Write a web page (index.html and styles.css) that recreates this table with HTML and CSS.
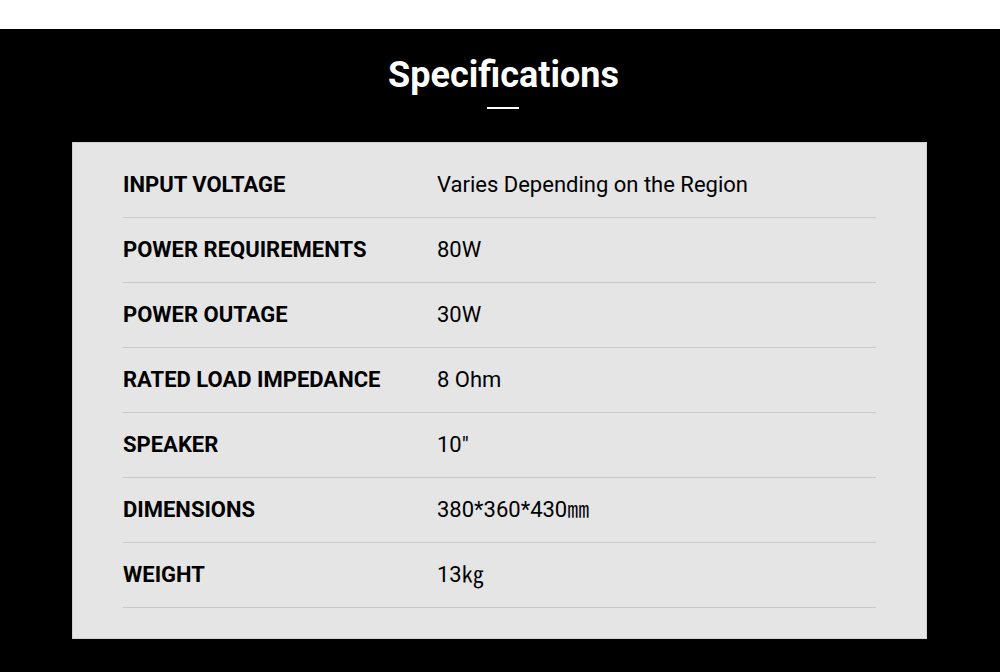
FILE: index.html
```html
<!DOCTYPE html>
<html>
<head>
<meta charset="utf-8">
<link rel="stylesheet" href="styles.css">
</head>
<body>
<div class="topbar"></div>
<section class="specs">
  <div class="heading">
    <h2 class="title">Specifications</h2>
    <div class="rule"></div>
  </div>
  <div class="card">
    <div class="row"><div class="label">INPUT VOLTAGE</div><div class="value">Varies Depending on the Region</div></div>
    <div class="row"><div class="label">POWER REQUIREMENTS</div><div class="value">80W</div></div>
    <div class="row"><div class="label">POWER OUTAGE</div><div class="value">30W</div></div>
    <div class="row"><div class="label">RATED LOAD IMPEDANCE</div><div class="value">8 Ohm</div></div>
    <div class="row"><div class="label">SPEAKER</div><div class="value">10"</div></div>
    <div class="row"><div class="label">DIMENSIONS</div><div class="value">380*360*430<span class="unit">㎜</span></div></div>
    <div class="row"><div class="label">WEIGHT</div><div class="value">13<span class="unit">㎏</span></div></div>
  </div>
</section>
</body>
</html>
```
FILE: styles.css
```css
html, body {
  margin: 0;
  padding: 0;
  background: #000;
}
body {
  font-family: Roboto, "Noto Sans CJK JP", sans-serif;
}
.topbar {
  height: 29px;
  background: #fff;
}
.specs {
  background: #000;
  padding-top: 25px;
  padding-right: 1px;
  display: flex;
  flex-direction: column;
  align-items: center;
  min-height: 643px;
}
.heading {
  display: flex;
  flex-direction: column;
  align-items: center;
  margin-left: 8px;
}
.title {
  margin: 0;
  color: #fff;
  font-weight: 700;
  font-size: 36px;
  line-height: 42px;
}
.rule {
  width: 32px;
  height: 2px;
  background: #fff;
  margin-top: 11px;
}
.card {
  margin-top: 33px;
  width: 855px;
  box-sizing: border-box;
  background: #e5e5e5;
  border: 1px solid #d0d0d0;
  padding: 10px 50px 30px 50px;
}
.row {
  display: flex;
  align-items: center;
  height: 64px;
  border-bottom: 1px solid #c9c9c9;
  font-size: 22px;
  line-height: 26px;
  color: #000;
}
.label {
  width: 314px;
  flex-shrink: 0;
  font-weight: 700;
}
.value {
  font-weight: 400;
}
.unit {
  font-family: "Noto Sans CJK JP", sans-serif;
  line-height: 0;
}
```
